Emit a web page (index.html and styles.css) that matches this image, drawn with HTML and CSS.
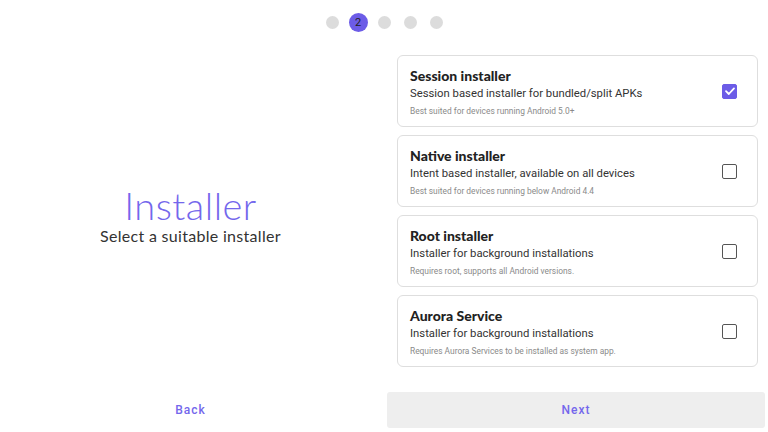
FILE: index.html
```html
<!DOCTYPE html>
<html lang="en">
<head>
	<meta charset="UTF-8">
	<title>Installer</title>
	<link rel="stylesheet" href="styles.css">
</head>
<body>
	<div class="stepper">
		<span class="dot"></span>
		<span class="dot active">2</span>
		<span class="dot"></span>
		<span class="dot"></span>
		<span class="dot"></span>
	</div>
	<div class="main">
		<div class="intro">
			<h1 class="title">Installer</h1>
			<p class="subtitle">Select a suitable installer</p>
		</div>
		<div class="list">
			<div class="card">
				<div class="info">
					<h5>Session installer</h5>
					<p class="desc">Session based installer for bundled/split APKs</p>
					<p class="note">Best suited for devices running Android 5.0+</p>
				</div>
				<span class="check checked">
					<svg width="12" height="12" viewBox="0 0 12 12"><path d="M2 6.2 L4.8 9 L10 3.4" fill="none" stroke="#fff" stroke-width="1.8" stroke-linecap="round" stroke-linejoin="round"/></svg>
				</span>
			</div>
			<div class="card">
				<div class="info">
					<h5>Native installer</h5>
					<p class="desc">Intent based installer, available on all devices</p>
					<p class="note">Best suited for devices running below Android 4.4</p>
				</div>
				<span class="check"></span>
			</div>
			<div class="card">
				<div class="info">
					<h5>Root installer</h5>
					<p class="desc">Installer for background installations</p>
					<p class="note">Requires root, supports all Android versions.</p>
				</div>
				<span class="check"></span>
			</div>
			<div class="card">
				<div class="info">
					<h5>Aurora Service</h5>
					<p class="desc">Installer for background installations</p>
					<p class="note">Requires Aurora Services to be installed as system app.</p>
				</div>
				<span class="check"></span>
			</div>
		</div>
	</div>
	<div class="footer">
		<button class="btn back">Back</button>
		<button class="btn next">Next</button>
	</div>
</body>
</html>
```

FILE: styles.css
```css
html, body{
	margin: 0;
	padding: 0;
	background: #fff;
	font-family: Roboto, "Liberation Sans", sans-serif;
	color: #333;
}
body{
	width: 768px;
	height: 432px;
	overflow: hidden;
}
.stepper{
	height: 44px;
	display: flex;
	align-items: center;
	justify-content: center;
	gap: 13px;
}
.dot{
	width: 13px;
	height: 13px;
	border-radius: 50%;
	background: #dcdcdc;
	display: flex;
	align-items: center;
	justify-content: center;
	font-size: 11px;
	color: #222;
}
.dot.active{
	width: 19px;
	height: 19px;
	margin: 0 -3px;
	background: #6c5ce7;
}
.main{
	display: flex;
	height: 329px;
}
.intro{
	width: 381px;
	display: flex;
	flex-direction: column;
	align-items: center;
	justify-content: center;
	padding-top: 11px;
}
.title{
	margin: 0;
	font-family: Lato, sans-serif;
	font-weight: 300;
	font-size: 38px;
	line-height: 44px;
	letter-spacing: 0.5px;
	color: #7467ec;
}
.subtitle{
	margin: 0;
	font-family: Lato, sans-serif;
	font-size: 16px;
	line-height: 18px;
	letter-spacing: 0.3px;
	color: #333;
}
.list{
	margin-left: 16px;
	width: 361px;
	padding-top: 11px;
	display: flex;
	flex-direction: column;
	gap: 8px;
}
.card{
	height: 70px;
	border: 1px solid #dedede;
	border-radius: 6px;
	display: flex;
	align-items: center;
	padding: 0 20px 0 12px;
}
.info{
	flex: 1;
	margin-top: 4px;
}
.info h5{
	margin: 0;
	font-family: Lato, sans-serif;
	font-weight: 900;
	font-size: 14px;
	line-height: 18px;
	color: #222;
}
.desc{
	margin: 0;
	font-size: 11.3px;
	line-height: 18px;
	color: #333;
}
.note{
	margin: 0;
	font-size: 8.4px;
	line-height: 17px;
	color: #8a8a8a;
}
.check{
	width: 13px;
	height: 13px;
	border: 1.5px solid #555;
	border-radius: 2px;
	display: flex;
	align-items: center;
	justify-content: center;
}
.check.checked{
	background: #6c5ce7;
	border-color: #6c5ce7;
}
.footer{
	display: flex;
	align-items: center;
	padding-top: 19px;
}
.btn{
	border: none;
	background: none;
	font-family: Roboto, sans-serif;
	font-weight: 500;
	font-size: 12px;
	letter-spacing: 1px;
	color: #7467ec;
	height: 36px;
	border-radius: 3px;
}
.back{
	width: 381px;
	margin-right: 6px;
}
.next{
	width: 378px;
	background: #eeeeee;
}
```
